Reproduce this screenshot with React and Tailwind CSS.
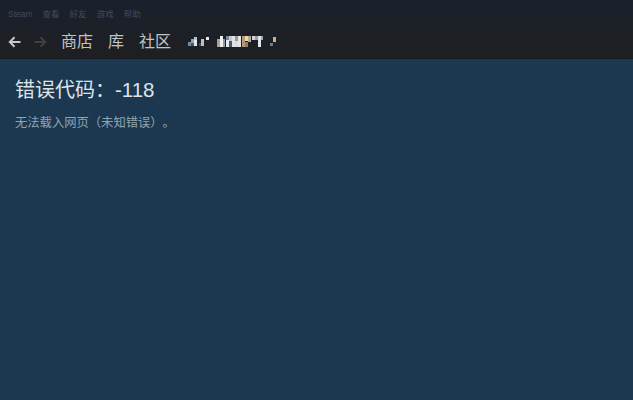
const font = { fontFamily: '"Liberation Sans", "Noto Sans CJK SC", sans-serif' };

const menu = ["Steam", "查看", "好友", "游戏", "帮助"];

// pixelated user name, each block is [x, y, w, h, colour]
const blocks = [
  [0, 7, 3, 4, "#6f8aa6"], [3, 4, 3, 4, "#8fa6bd"], [3, 8, 3, 3, "#3f5a78"], [6, 2, 3, 3, "#b6c6d6"], [6, 5, 3, 6, "#e2e8ee"],
  [11, 8, 3, 3, "#3c5068"], [13, 4, 3, 7, "#b6c2ce"], [18, 2, 3, 3, "#dfe6ee"],
  [29, 4, 3, 8, "#b3a08f"], [32, 1, 3, 11, "#eceff2"], [35, 4, 2, 8, "#8f9aa6"],
  [38, 1, 3, 4, "#7b8796"], [38, 5, 3, 7, "#e6e9ee"], [41, 1, 3, 5, "#c4ccd4"], [41, 6, 3, 6, "#4a5868"], [44, 1, 3, 11, "#dfe3e8"],
  [47, 1, 3, 5, "#a49689"], [47, 6, 3, 6, "#d8dde3"], [50, 1, 3, 11, "#e4e6e8"],
  [54, 1, 3, 11, "#b59a70"], [57, 1, 3, 5, "#e3d7bd"], [57, 7, 3, 5, "#8a8270"], [60, 1, 3, 6, "#b8ab92"],
  [64, 1, 3, 4, "#cfd6de"], [67, 1, 3, 4, "#8fa0b2"], [70, 1, 3, 11, "#dfe6ee"], [73, 1, 2, 4, "#9aa9b8"],
  [85, 2, 3, 5, "#c9b08a"], [82, 8, 3, 3, "#5e7ea6"],
];

export default function App() {
  return (
    <div className="w-[633px] h-[400px] flex flex-col overflow-hidden bg-[#1b3850] [text-spacing-trim:space-all]" style={font}>
      <header className="h-[59px] flex flex-col bg-gradient-to-b from-[#1a202c] to-[#1e1f21] border-b border-[#15181c]">
        <div className="h-[29px] flex items-center gap-[10px] pl-[8px] text-[8.5px] text-[#434b5b]">
          {menu.map((m) => (
            <span key={m}>{m}</span>
          ))}
        </div>
        <nav className="flex items-center h-[25px] pl-[8px]">
          <svg width="13" height="12" viewBox="0 0 13 12" fill="none" stroke="#c4c8cc" strokeWidth="2">
            <path d="M12.5 6H2M6.5 1.2 1.8 6l4.7 4.8" />
          </svg>
          <svg className="ml-[13px]" width="13" height="12" viewBox="0 0 13 12" fill="none" stroke="#3d4043" strokeWidth="2">
            <path d="M0.5 6H11M6.5 1.2 11.2 6l-4.7 4.8" />
          </svg>
          <div className="flex items-center gap-[15px] ml-[14px] text-[16px] text-[#c0c4c7]">
            <span>商店</span>
            <span>库</span>
            <span>社区</span>
          </div>
          <svg className="ml-[17px] blur-[0.5px]" width="90" height="14" viewBox="0 0 90 14" shapeRendering="crispEdges">
            {blocks.map(([x, y, w, h, c], i) => (
              <rect key={i} x={x} y={y} width={w} height={h} fill={c} />
            ))}
          </svg>
        </nav>
      </header>
      <main className="flex-1 px-[15px] pt-[19px]">
        <h1 className="text-[20px] leading-[24px] text-[#dde4e8]">
          错误代码：<span className="text-[20.5px]">-118</span>
        </h1>
        <p className="mt-[13px] text-[12.3px] leading-[16px] text-[#93a3af]">无法载入网页（未知错误）。</p>
      </main>
    </div>
  );
}
